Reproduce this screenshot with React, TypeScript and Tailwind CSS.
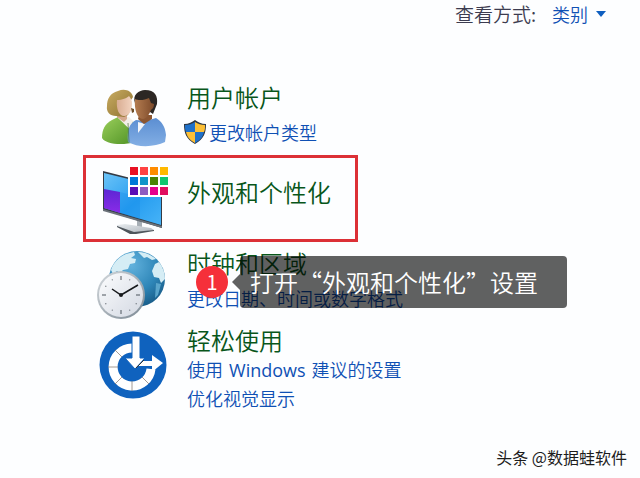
import type { ReactNode } from "react";

const FONT = "font-['Noto_Sans_CJK_SC',sans-serif]";

function UsersIcon() {
  return (
    <svg viewBox="0 0 72 72" className="size-[72px] shrink-0" aria-hidden="true">
      <defs>
        <linearGradient id="green" x1="0" y1="0" x2="1" y2="1">
          <stop offset="0" stopColor="#9bcf5c" />
          <stop offset="1" stopColor="#4f9224" />
        </linearGradient>
        <linearGradient id="shirt" x1="0" y1="0" x2="0" y2="1">
          <stop offset="0" stopColor="#5b8ed2" />
          <stop offset="1" stopColor="#82aee4" />
        </linearGradient>
        <linearGradient id="hair" x1="0" y1="0" x2="1" y2="1">
          <stop offset="0" stopColor="#c9ac62" />
          <stop offset="1" stopColor="#8d7130" />
        </linearGradient>
        <linearGradient id="skinA" x1="0" y1="0" x2="1" y2="0">
          <stop offset="0" stopColor="#d9ad92" />
          <stop offset="1" stopColor="#f2d3bf" />
        </linearGradient>
        <linearGradient id="skinB" x1="0" y1="0" x2="1" y2="0">
          <stop offset="0" stopColor="#b47c50" />
          <stop offset="1" stopColor="#7c4a2a" />
        </linearGradient>
      </defs>
      <path d="M5 60C5 51 8 46 15 42l6-3 11 1 6 6v18C25 68 8 66 5 60z" fill="url(#green)" />
      <path d="M21 40l11-1 4 4-2 10c-3-4-8-8-13-13z" fill="#f3efe9" />
      <path d="M20 32h10v9l-3 3-7-5z" fill="#d5a98e" />
      <path d="M21 13c7-3 14 0 15 6l-2 3c1 6-1 10-3 15l-4 2-8-1C13 38 9 34 10 28c0-7 3-13 11-15z" fill="url(#hair)" />
      <path d="M20 22c5 0 10-2 12-4 2 2 3 5 3 8 0 7-3 12-8 12-5 0-8-7-7-16z" fill="url(#skinA)" />
      <path d="M34 30l3 1v3l-2 1z" fill="#6d4d28" />
      <path d="M31 64c-1-12 1-18 8-22l10 1 10-3c6 4 9 8 10 17l-1 7c-10 5-27 6-37 0z" fill="url(#shirt)" />
      <path d="M41 44l7 2-7 9z" fill="#f2f5fa" />
      <path d="M42 37h13v4l-8 5-6-5z" fill="#8b5632" />
      <path d="M38 25c-3-8 4-13 10-13 10 0 13 6 12 14l-4 10-12-8z" fill="#2c2724" />
      <path d="M38 21c4 2 10 1 14-1l2 5 3 1c0 4-2 5-3 6-2 5-5 9-8 9-6 0-9-10-8-20z" fill="url(#skinB)" />
      <path d="M31 45l1 19" stroke="#48703c" strokeWidth=".7" fill="none" />
    </svg>
  );
}

const SWATCHES = [
  "#e81123", "#ff4343", "#ff8c00", "#ffb900",
  "#0078d7", "#0e95c9", "#498205", "#10c66f",
  "#5a0db5", "#8e5cc0", "#e3008c", "#e00d5f",
];

function DisplayIcon() {
  return (
    <svg viewBox="0 0 72 72" className="size-[72px] shrink-0" aria-hidden="true">
      <defs>
        <linearGradient id="screen" x1="0" y1="0" x2="1" y2="1">
          <stop offset="0" stopColor="#6bc3f7" />
          <stop offset=".55" stopColor="#269df0" />
          <stop offset="1" stopColor="#47b3f7" />
        </linearGradient>
        <linearGradient id="violet" x1="0" y1="0" x2="0" y2="1">
          <stop offset="0" stopColor="#5c27d3" />
          <stop offset="1" stopColor="#8a2be8" />
        </linearGradient>
        <linearGradient id="stand" x1="0" y1="0" x2="1" y2="1">
          <stop offset="0" stopColor="#e9edf0" />
          <stop offset="1" stopColor="#aab2ba" />
        </linearGradient>
      </defs>
      <path d="M40 56h5v8h-5z" fill="#a7afb6" />
      <path d="M20 62l8-1 26 4 3 2-18 3h-6L20 64z" fill="url(#stand)" />
      <path d="M20 63l17 6 20-2v1l-18 3h-6L20 64z" fill="#4e555b" />
      <path d="M6 8l59 15v42L6 47z" fill="#343b44" />
      <path d="M7 10l57 14v38L7 45z" fill="url(#screen)" />
      <path d="M7 26l16 3v21L7 45z" fill="url(#violet)" />
      <path d="M23 29l20 5v22L23 50z" fill="#168beb" opacity=".35" />
      <path d="M6 46l59 17v2L6 48z" fill="#6b727a" />
      <path d="M31 3h41v31H31z" fill="#fff" />
      {SWATCHES.map((color, i) => (
        <rect
          key={color}
          x={33 + (i % 4) * 10}
          y={4 + Math.floor(i / 4) * 10}
          width="8"
          height="8"
          fill={color}
        />
      ))}
    </svg>
  );
}

function ClockIcon() {
  const ticks = Array.from({ length: 12 }, (_, i) => i * 30);
  return (
    <svg viewBox="0 0 72 72" className="size-[72px] shrink-0" aria-hidden="true">
      <defs>
        <radialGradient id="globe" cx=".4" cy=".25" r=".8">
          <stop offset="0" stopColor="#62b2dd" />
          <stop offset=".6" stopColor="#2e86b8" />
          <stop offset="1" stopColor="#175a86" />
        </radialGradient>
        <linearGradient id="dial" x1="0" y1="0" x2="1" y2="1">
          <stop offset="0" stopColor="#fcfdfe" />
          <stop offset="1" stopColor="#d3d8e2" />
        </linearGradient>
        <linearGradient id="rim" x1="0" y1="0" x2="1" y2="1">
          <stop offset="0" stopColor="#d5dade" />
          <stop offset="1" stopColor="#7b8893" />
        </linearGradient>
      </defs>
      <circle cx="40" cy="31" r="28" fill="url(#globe)" />
      <path d="M14 22c2-7 8-13 15-16l8-2 1 3-4 3 5 1-1 4-5 1-2 5-5 1-3 3-3-2-4 3z" fill="#d5edf5" />
      <path d="M41 4c7 0 13 3 18 7l-4 1-5-3-3 1z" fill="#d5edf5" />
      <path d="M58 16l4-2c4 5 6 11 6 17l-4 4-2-5-5-1-2-6z" fill="#d5edf5" />
      <path d="M59 35l5 1-3 11-3 3z" fill="#5aa5cb" />
      <circle cx="24" cy="47" r="24" fill="url(#rim)" />
      <circle cx="24" cy="47" r="22" fill="url(#dial)" />
      {ticks.map((a) => (
        <path
          key={a}
          d={a % 90 === 0 ? "M24 28v4" : "M24 29v1"}
          transform={`rotate(${a} 24 47)`}
          stroke="#4d545c"
          strokeWidth="1"
        />
      ))}
      <path d="M15 41l9 6 17-10" fill="none" stroke="#17191c" strokeWidth="1.5" />
      <circle cx="24" cy="47" r="2" fill="#17191c" />
    </svg>
  );
}

function EaseIcon() {
  return (
    <svg viewBox="0 0 72 72" className="size-[72px] shrink-0" aria-hidden="true">
      <circle cx="36" cy="36" r="33.500" fill="#0f62be" />
      <path d="M35 19a19 19 0 1 0 19 21" fill="none" stroke="#fff" strokeWidth="9" />
      <g stroke="#8a8078" strokeWidth=".8">
        <path d="M18 21l7 7M11 38h10M18 55l7-7M35 52v10M45 48l7 7" />
      </g>
      <path d="M42 32h13v-6l11 8-11 9v-6H40z" fill="#fff" />
      <path d="M35 7h8v22h5L38 40 28 29h7z" fill="#fff" stroke="#0f62be" strokeWidth="1" />
      <path d="M39 39l8-8" stroke="#343434" strokeWidth="1" />
    </svg>
  );
}

function ShieldIcon() {
  return (
    <svg viewBox="0 0 24 26" className="h-[26px] w-6 shrink-0" aria-hidden="true">
      <path d="M12 1c3 2 6 4 11 4 0 9-2 15-11 20C3 20 1 14 1 5c5 0 8-2 11-4z" fill="#2b3542" />
      <path d="M12 3v10H3c-1-2-1-4-1-7 4 0 7-1 10-3z" fill="#1f70c9" />
      <path d="M12 3c3 2 6 3 10 3 0 3 0 5-1 7h-9z" fill="#fcbf35" />
      <path d="M3 13h9v11c-6-3-8-7-9-11z" fill="#fcbf35" />
      <path d="M12 13h9c-1 4-3 8-9 11z" fill="#1f70c9" />
    </svg>
  );
}

function Title({ children }: { children: ReactNode }) {
  return (
    <h2 className="text-2xl leading-[30px] font-[350] text-[#08561a]">
      <a href="#" className="whitespace-nowrap">{children}</a>
    </h2>
  );
}

function TaskLink({ children }: { children: ReactNode }) {
  return (
    <a href="#" className="block text-lg leading-7 font-[350] whitespace-nowrap text-[#0f50b4]">
      {children}
    </a>
  );
}

export default function App() {
  return (
    <div className={`flex min-h-screen flex-col bg-[#fdfeff] ${FONT}`}>
      <header className="flex h-7 items-center justify-end pr-[34px] font-[350]">
        <label htmlFor="view" className="text-[19px] text-[#3c3c50]">查看方式:</label>
        <div className="relative ml-4 flex items-center text-lg">
          <select
            id="view"
            defaultValue="category"
            className="w-[54px] appearance-none bg-transparent text-[#0f50b4] outline-none"
          >
            <option value="category">类别</option>
          </select>
          <svg viewBox="0 0 10 6" className="pointer-events-none absolute right-0 h-1.5 w-2.5" aria-hidden="true">
            <path d="M0 0h10L5 6z" fill="#0f5fc0" />
          </svg>
        </div>
      </header>

      <main className="flex flex-col items-start pt-[50px] pl-[83px]">
        <section className="flex items-center gap-[18px] px-3.5">
          <UsersIcon />
          <div className="flex flex-col gap-1.5">
            <Title>用户帐户</Title>
            <div className="-ml-1 flex items-center">
              <ShieldIcon />
              <div className="ml-0.5"><TaskLink>更改帐户类型</TaskLink></div>
            </div>
          </div>
        </section>

        <section className="mt-[5px] flex h-[87px] w-[275px] items-center gap-[18px] border-[3px] border-[#dc3036] px-[11px]">
          <DisplayIcon />
          <div className="pb-3.5"><Title>外观和个性化</Title></div>
        </section>

        <section className="relative mt-[6px] flex items-start gap-[18px] px-3.5">
          <ClockIcon />
          <div className="flex flex-col gap-1.5">
            <Title>时钟和区域</Title>
            <TaskLink>更改日期、时间或数字格式</TaskLink>
          </div>
          <div role="note" className="absolute top-2 left-[113px] flex items-center">
            <span className="flex size-8 items-center justify-center rounded-full bg-[#f5303a] text-xl leading-none text-white">
              1
            </span>
            <svg viewBox="0 0 8 16" className="ml-1 h-4 w-2" aria-hidden="true">
              <path d="M8 0v16L0 8z" fill="#000" fillOpacity=".62" />
            </svg>
            <p className="flex h-[52px] w-[327px] items-center rounded-sm bg-black/62 pl-2.5 text-2xl font-[350] whitespace-nowrap text-white">
              打开“外观和个性化”设置
            </p>
          </div>
        </section>

        <section className="mt-[5px] flex items-start gap-[18px] px-3.5">
          <div className="pt-1"><EaseIcon /></div>
          <div>
            <Title>轻松使用</Title>
            <TaskLink>使用 <span className="mx-0.5 font-['Open_Sans',sans-serif] font-normal">Windows</span> 建议的设置</TaskLink>
            <TaskLink>优化视觉显示</TaskLink>
          </div>
        </section>
      </main>

      <footer className="mt-auto pr-[13px] pb-[9px] text-right text-base leading-6 text-[#1c1c1c]">
        头条 @数据蛙软件
      </footer>
    </div>
  );
}
